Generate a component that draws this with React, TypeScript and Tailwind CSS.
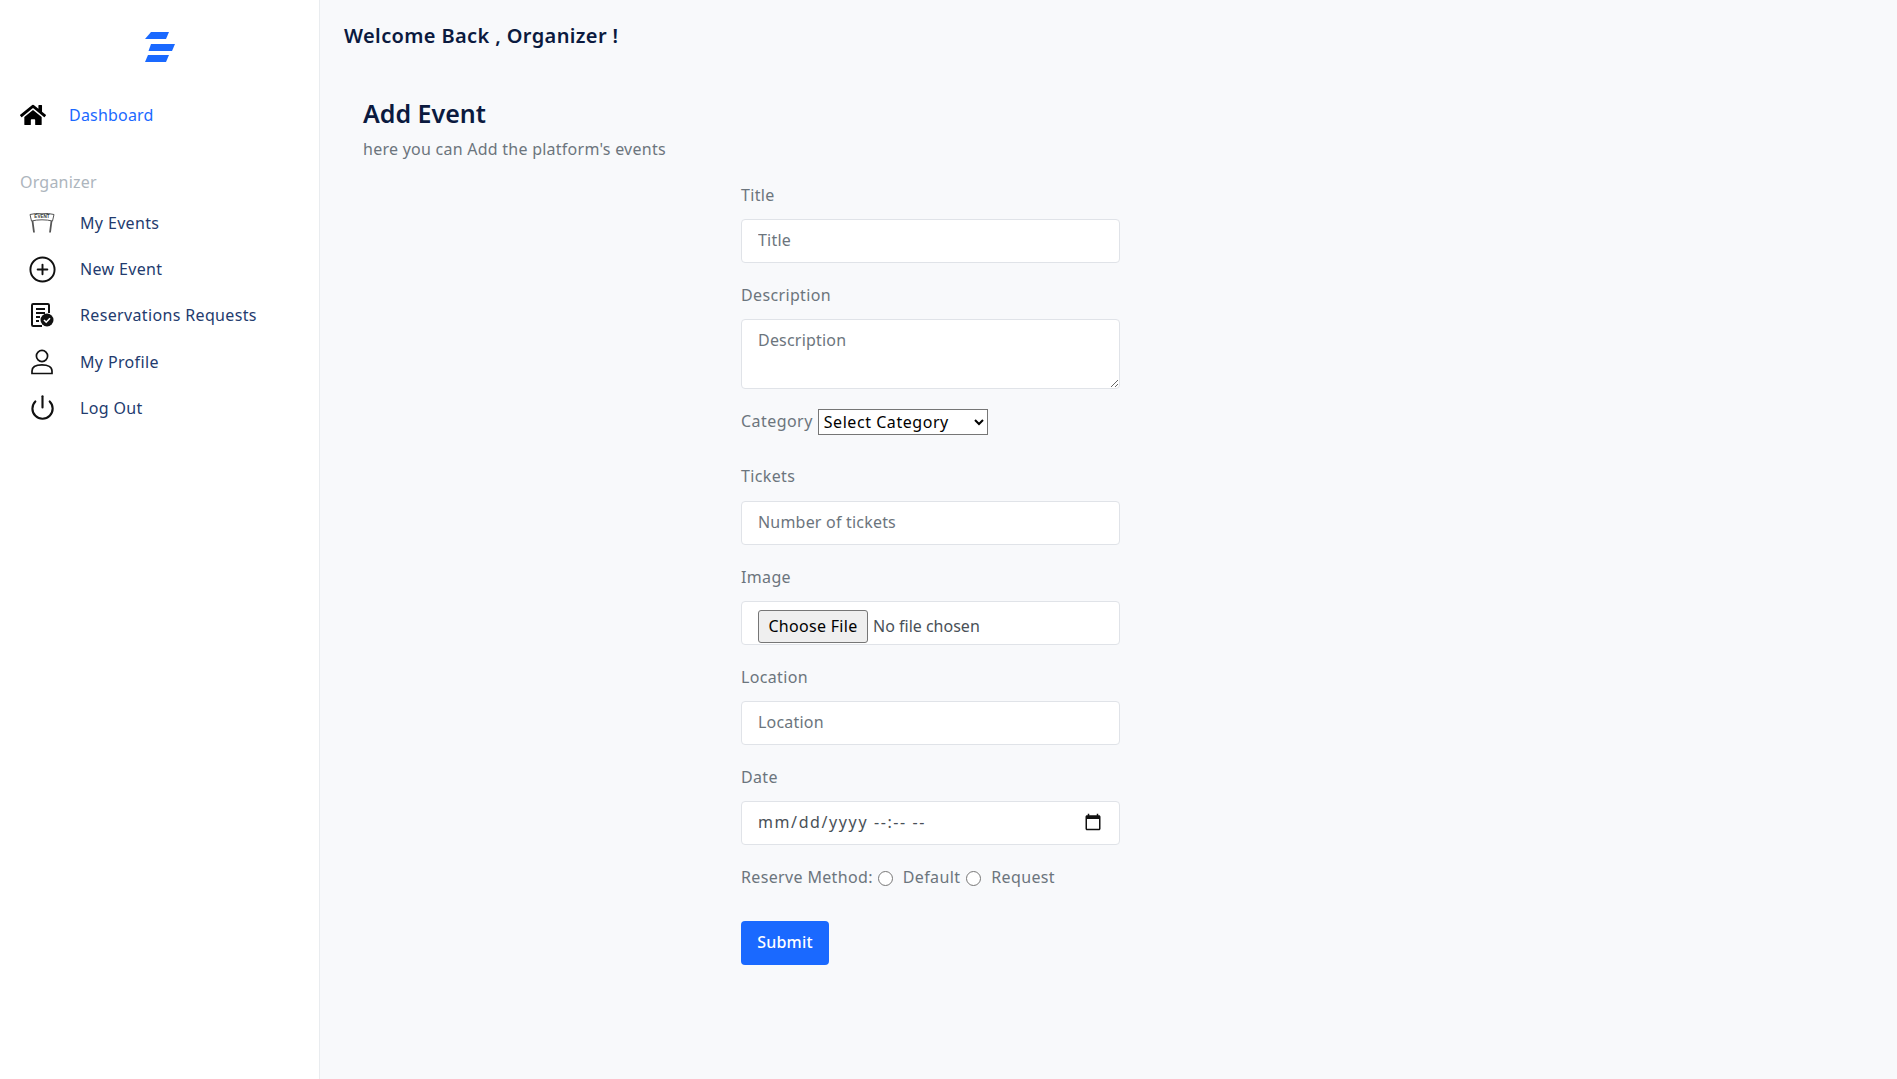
import React from 'react';
import { FaHome } from 'react-icons/fa';
import { CirclePlus, Power } from 'lucide-react';

function EventIcon() {
	return (
		<svg viewBox="0 0 26 20" className="h-5 w-[26px]" fill="none" stroke="#222">
			<path d="M1 1.5 C8 -0.2 18 -0.2 25 1.5 L23.5 8 C17 6.4 9 6.4 2.5 8 Z" fill="#fff" strokeWidth="1" stroke="#555" />
			<path d="M3.5 8 L5 19.5 M22.5 8 L21 19.5" strokeWidth="1.8" stroke="#555" />
			<text x="13" y="5.2" textAnchor="middle" fontSize="4.6" fontWeight="700" fill="#333" stroke="none" fontFamily="'Liberation Sans', sans-serif">
				EVENT
			</text>
		</svg>
	);
}

function RequestIcon() {
	return (
		<svg viewBox="0 0 24 24" className="h-6 w-6" fill="none" stroke="#111">
			<path d="M12 23 H3.2 a1.2 1.2 0 0 1 -1.2 -1.2 V2.2 A1.2 1.2 0 0 1 3.2 1 H17.8 A1.2 1.2 0 0 1 19 2.2 V10" strokeWidth="2" />
			<path d="M6 6 H15 M6 10 H15 M6 14 H10 M6 18 H9" strokeWidth="1.8" />
			<circle cx="17" cy="17" r="6.5" fill="#111" stroke="none" />
			<path d="M14 17 L16.2 19.2 L20 15.2" stroke="#fff" strokeWidth="1.6" />
		</svg>
	);
}

function ProfileIcon() {
	return (
		<svg viewBox="0 0 24 26" className="h-[26px] w-6" fill="none" stroke="#111" strokeWidth="1.7">
			<circle cx="12" cy="7" r="5.6" />
			<path d="M2 24.5 V22 C2 18 6 15.8 12 15.8 C18 15.8 22 18 22 22 V24.5 Z" />
		</svg>
	);
}

const links = [
	{ text: 'My Events', icon: <EventIcon /> },
	{ text: 'New Event', icon: <CirclePlus size={29} strokeWidth={1.6} color="#111" /> },
	{ text: 'Reservations Requests', icon: <RequestIcon /> },
	{ text: 'My Profile', icon: <ProfileIcon /> },
	{ text: 'Log Out', icon: <Power size={27} strokeWidth={1.9} color="#111" /> },
];

const labelCls = 'block text-[16px] leading-[26px] tracking-[0.35px] text-[#6c757d]';
const inputCls =
	'block w-full h-11 rounded-[4px] border border-[#e0e3e8] bg-white px-4 pb-[2px] text-[16px] tracking-[0.2px] text-[#495057] placeholder:text-[#6c757d] outline-none';

function Sidebar() {
	return (
		<aside className="w-[320px] shrink-0 bg-white border-r border-[#e9ecef] min-h-[1079px]">
			<div className="flex justify-center pt-8">
				<svg viewBox="0 0 30 30" className="h-[30px] w-[30px]" fill="#1a69ff">
					<path d="M6 0 H24 L21 7 H0 Z" />
					<path d="M6 12 H30 L27 19 H6 L3.5 19 Z" />
					<path d="M3 23 H24 L21 30 H0 Z" />
				</svg>
			</div>
			<div className="flex items-center mt-[41px] pl-5 h-6">
				<FaHome size={26} color="#000" />
				<p className="ml-[23px] text-[16px] leading-6 tracking-[0.2px] text-[#1a69ff]">Dashboard</p>
			</div>
			<p className="mt-[43px] pl-5 text-[16px] leading-6 tracking-[0.2px] text-[#adb5bd]">Organizer</p>
			<ul className="mt-[17px] flex flex-col gap-[22.2px]">
				{links.map((l, i) => (
					<li key={i} className="flex items-center h-6 pl-[27px]">
						<div className="w-[30px] flex justify-center">{l.icon}</div>
						<p className="ml-[23px] text-[16px] leading-6 tracking-[0.35px] text-[#233b6e]">{l.text}</p>
					</li>
				))}
			</ul>
		</aside>
	);
}

function App() {
	return (
		<div className="flex min-h-[1079px] bg-[#f8f9fb] font-['Noto_Sans',sans-serif] overflow-hidden">
			<Sidebar />
			<main className="flex-1">
				<h2 className="pl-[24px] pt-[22px] text-[20px] leading-[28px] tracking-[0.37px] font-semibold text-[#0b1a3f]">
					Welcome Back , Organizer !
				</h2>
				<div className="pl-[43px] mt-[47px]">
					<h1 className="text-[25px] leading-[32px] font-semibold text-[#0b1a3f]">Add Event</h1>
					<p className="mt-[8px] text-[16px] leading-6 tracking-[0.25px] text-[#6c757d]">here you can Add the platform's events</p>
				</div>
				<form className="ml-[421px] mt-[21px] w-[379px]">
					<label className={labelCls}>Title</label>
					<input className={`${inputCls} mt-[11px]`} placeholder="Title" />
					<label className={`${labelCls} mt-[19px]`}>Description</label>
					<textarea
						className="block w-full h-[70px] mt-[11px] rounded-[4px] border border-[#e0e3e8] bg-white px-4 py-[8px] text-[16px] leading-6 tracking-[0.2px] placeholder:text-[#6c757d] outline-none"
						placeholder="Description"
					/>
					<div className="mt-[20px] flex items-center h-[26px]">
						<label className="pb-[2px] text-[16px] tracking-[0.45px] text-[#6c757d]">Category</label>
						<select className="ml-[5px] w-[170px] h-[26px] pl-[1px] pb-[2px] border border-[#767676] bg-white text-[16px] tracking-[0.55px] text-black">
							<option>Select Category</option>
						</select>
					</div>
					<label className={`${labelCls} mt-[28px]`}>Tickets</label>
					<input className={`${inputCls} mt-[12px]`} placeholder="Number of tickets" />
					<label className={`${labelCls} mt-[19px]`}>Image</label>
					<div className="mt-[11px] h-11 rounded-[4px] border border-[#e0e3e8] bg-white pl-4 flex items-start pt-[8px]">
						<input
							type="file"
							className="text-[16px] text-[#495057] file:mr-[5px] file:h-[33px] file:w-[110px] file:rounded-[3px] file:border file:border-[#767676] file:bg-[#efefef] file:pb-[2px] file:text-black file:text-[16px] file:tracking-[0.3px]"
						/>
					</div>
					<label className={`${labelCls} mt-[19px]`}>Location</label>
					<input className={`${inputCls} mt-[11px]`} placeholder="Location" />
					<label className={`${labelCls} mt-[19px]`}>Date</label>
					<div className="relative mt-[11px]">
						<input className={`${inputCls} tracking-[1.6px]`} defaultValue="mm/dd/yyyy --:-- --" />
						<svg viewBox="0 0 24 24" className="absolute right-[18px] top-[12px] h-[18px] w-[18px] pointer-events-none" fill="#111">
							<path d="M20 3h-1V1h-2v2H7V1H5v2H4c-1.1 0-2 .9-2 2v16c0 1.1.9 2 2 2h16c1.1 0 2-.9 2-2V5c0-1.1-.9-2-2-2zm0 18H4V8h16v13z" />
						</svg>
					</div>
					<div className="mt-[20px] flex items-center h-6 text-[16px] tracking-[0.35px] text-[#6c757d]">
						<span>Reserve Method:</span>
						<input type="radio" name="m" className="ml-[5px] h-[15px] w-[15px] mt-[3px]" />
						<span className="ml-[10px]">Default</span>
						<input type="radio" name="m" className="ml-[6px] h-[15px] w-[15px] mt-[3px]" />
						<span className="ml-[10px]">Request</span>
					</div>
					<button
						type="button"
						className="mt-[32px] h-11 w-[88px] rounded-[4px] bg-[#1a69ff] pb-[2px] text-white text-[16px] tracking-[0.2px] font-medium"
					>
						Submit
					</button>
				</form>
			</main>
		</div>
	);
}

export default App;
